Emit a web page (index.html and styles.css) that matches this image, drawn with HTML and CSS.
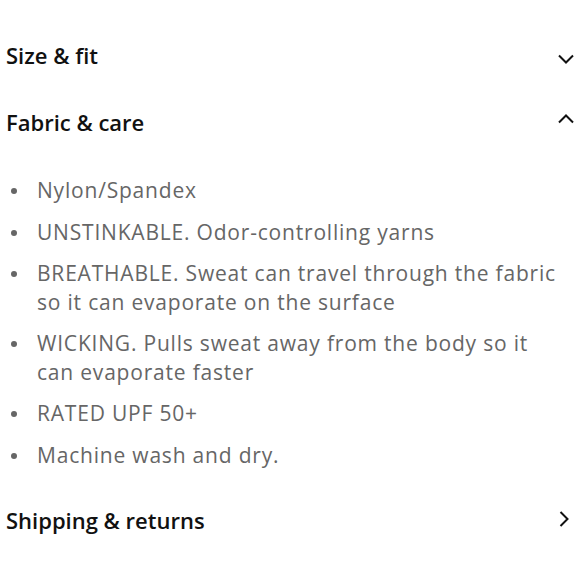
FILE: index.html
```html
<!DOCTYPE html>
<html>
<head>
<meta charset="utf-8">
<link rel="stylesheet" href="styles.css">
</head>
<body>
<div class="accordion">
  <section class="panel">
    <div class="panel-head">
      <h2 class="panel-title">Size &amp; fit</h2>
      <svg class="chev chev-down" width="24" height="24" viewBox="0 0 24 24"><path d="M5 8.5 L12 15.5 L19 8.5" fill="none" stroke="#111" stroke-width="2"/></svg>
    </div>
  </section>
  <section class="panel">
    <div class="panel-head">
      <h2 class="panel-title">Fabric &amp; care</h2>
      <svg class="chev chev-up" width="24" height="24" viewBox="0 0 24 24"><path d="M5 15.5 L12 8.5 L19 15.5" fill="none" stroke="#111" stroke-width="2"/></svg>
    </div>
    <ul class="care-list">
      <li>Nylon/Spandex</li>
      <li>UNSTINKABLE. Odor-controlling yarns</li>
      <li>BREATHABLE. Sweat can travel through the fabric so it can evaporate on the surface</li>
      <li>WICKING. Pulls sweat away from the body so it can evaporate faster</li>
      <li>RATED UPF 50+</li>
      <li>Machine wash and dry.</li>
    </ul>
  </section>
  <section class="panel panel-last">
    <div class="panel-head">
      <h2 class="panel-title">Shipping &amp; returns</h2>
      <svg class="chev chev-right" width="24" height="24" viewBox="0 0 24 24"><path d="M8.5 5 L15.5 12 L8.5 19" fill="none" stroke="#111" stroke-width="2"/></svg>
    </div>
  </section>
</div>
</body>
</html>
```
FILE: styles.css
```css
html, body {
  margin: 0;
  padding: 0;
  background: #fff;
}
body {
  font-family: "Open Sans", "Lato", sans-serif;
}
.accordion {
  padding: 41px 2px 0 6px;
}
.panel-head {
  display: flex;
  align-items: center;
  justify-content: space-between;
  height: 28px;
}
.panel + .panel {
  margin-top: 39px;
}
.panel + .panel-last {
  margin-top: 37px;
}
.panel-title {
  margin: 0;
  font-size: 22px;
  font-weight: 600;
  line-height: 28px;
  color: #111;
}
.chev {
  display: block;
  flex: none;
}
.chev-down { margin-top: 7px; }
.chev-up { margin-top: -7px; }
.chev-right { margin-top: -2px; margin-right: 2px; }
.care-list {
  list-style: none;
  margin: 40px 0 0 0;
  padding: 0 10px 0 0;
  display: flex;
  flex-direction: column;
  gap: 13px;
}
.care-list li {
  position: relative;
  padding-left: 31px;
  font-size: 21px;
  letter-spacing: 0.8px;
  line-height: 28.5px;
  color: #666;
}
.care-list li::before {
  content: "";
  position: absolute;
  left: 5px;
  top: 12px;
  width: 6px;
  height: 6px;
  border-radius: 50%;
  background: #666;
}
```
